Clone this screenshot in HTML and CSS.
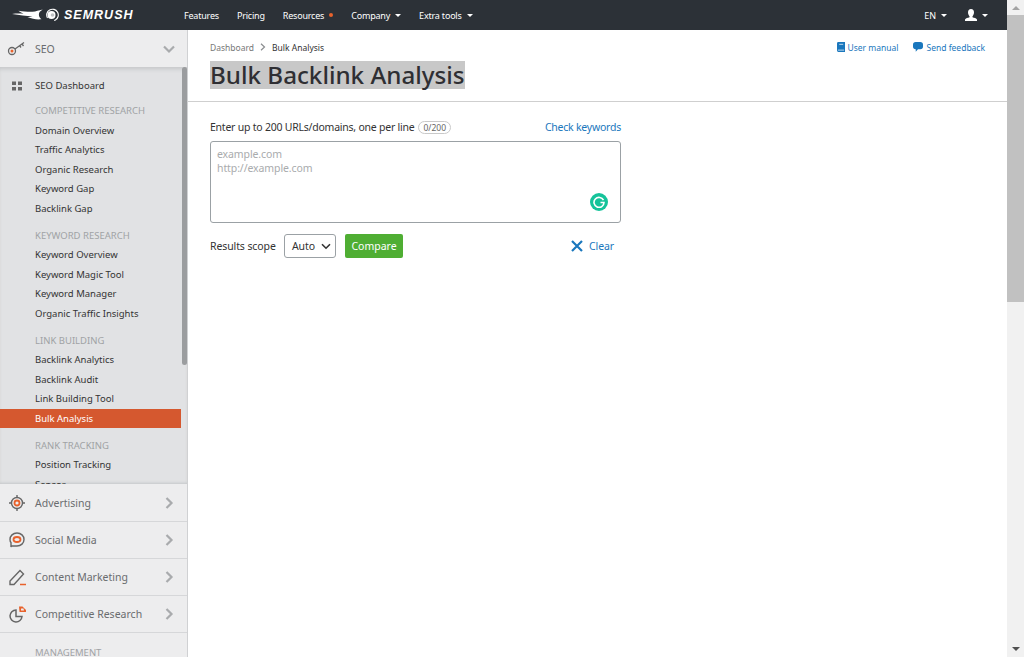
FILE: index.html
```html
<!DOCTYPE html>
<html lang="en">
<head>
<meta charset="utf-8">
<title>Bulk Backlink Analysis</title>
<link rel="stylesheet" href="styles.css">
</head>
<body>
<div class="page">
  <div class="viewport">
    <header class="topbar">
      <a class="logo">
        <svg class="logo-mark" width="47" height="16" viewBox="0 0 47 16">
          <path transform="scale(1.28 1)" fill="#fff" d="M0 7c3-.5 6-.6 9-.2C7.500 6 6 4.800 5 3.800c4 .8 8 1.200 11 1 3-.2 4.500-1.500 8-2.300-2 1.500-3 3-3 5s.8 3.500 2 4.800c-4 .4-7-.2-11-2.300 1.500-.1 3-.3 4-.8C11 9 6 8 0 7z"/>
          <circle cx="40.500" cy="8" r="5.800" fill="none" stroke="#fff" stroke-width="1.100" stroke-dasharray="28 8.500" transform="rotate(150 40.500 8)"/>
          <circle cx="39.500" cy="8" r="4" fill="#fff"/>
          <circle cx="40.500" cy="8" r="1.800" fill="#2c3137" opacity=".3"/>
        </svg>
        <span class="logo-text">SEMRUSH</span>
      </a>
      <nav class="topnav">
        <a>Features</a>
        <a>Pricing</a>
        <a>Resources<i class="dot"></i></a>
        <a>Company<i class="caret"></i></a>
        <a>Extra tools<i class="caret"></i></a>
      </nav>
      <div class="top-right">
        <a>EN<i class="caret"></i></a>
        <a class="user">
          <svg width="12" height="12" viewBox="0 0 12 12"><path fill="#fff" d="M6 0c2 0 3 1.500 3 3.500S8 6.500 7.500 7.300v.9c1.500.5 4 1 4.500 2.300V12H0v-1.500c.5-1.300 3-1.800 4.500-2.300v-.9C4 6.500 3 5.500 3 3.500S4 0 6 0z"/></svg>
          <i class="caret"></i>
        </a>
      </div>
    </header>
    <div class="body">
      <aside class="sidebar">
        <div class="acc acc-open">
          <svg class="acc-icon" width="20" height="20" viewBox="0 0 20 20"><circle cx="5" cy="12" r="3.500" fill="none" stroke="#666" stroke-width="1.300"/><circle cx="5" cy="12" r="1.500" fill="#e8622c"/><path fill="none" stroke="#666" stroke-width="1.300" d="M8 10l9-6.500M12.500 6.500l1.500 2M15 5l1.500 2"/></svg>
          <span class="acc-label">SEO</span>
          <svg class="chev" width="14" height="14" viewBox="0 0 14 14"><path fill="none" stroke="#a9abad" stroke-width="2.200" d="M2 4.500l5 5 5-5"/></svg>
        </div>
        <div class="submenu">
          <ul class="list">
            <li class="item dash">
              <svg class="grid-icon" width="10" height="10" viewBox="0 0 10 10"><path fill="#666" d="M0 .5h4v3.500H0zM6 .5h4v3.500H6zM0 6h4v3.500H0zM6 6h4v3.500H6z"/></svg>
              SEO Dashboard
            </li>
            <li class="head">COMPETITIVE RESEARCH</li>
            <li class="item">Domain Overview</li>
            <li class="item">Traffic Analytics</li>
            <li class="item">Organic Research</li>
            <li class="item">Keyword Gap</li>
            <li class="item">Backlink Gap</li>
            <li class="head">KEYWORD RESEARCH</li>
            <li class="item">Keyword Overview</li>
            <li class="item">Keyword Magic Tool</li>
            <li class="item">Keyword Manager</li>
            <li class="item">Organic Traffic Insights</li>
            <li class="head">LINK BUILDING</li>
            <li class="item">Backlink Analytics</li>
            <li class="item">Backlink Audit</li>
            <li class="item">Link Building Tool</li>
            <li class="item active">Bulk Analysis</li>
            <li class="head">RANK TRACKING</li>
            <li class="item">Position Tracking</li>
            <li class="item">Sensor</li>
          </ul>
          <div class="sub-scroll"></div>
        </div>
        <div class="acc">
          <svg class="acc-icon" width="20" height="20" viewBox="0 0 20 20"><circle cx="10" cy="10" r="5.500" fill="none" stroke="#666" stroke-width="1.400"/><circle cx="10" cy="10" r="2.500" fill="none" stroke="#e8622c" stroke-width="1.800"/><path stroke="#666" stroke-width="1.400" d="M10 2v2.500M10 15.500V18M2 10h2.500M15.500 10H18"/></svg>
          <span class="acc-label">Advertising</span>
          <svg class="chev" width="14" height="14" viewBox="0 0 14 14"><path fill="none" stroke="#a9abad" stroke-width="2.200" d="M4.500 2l5 5-5 5"/></svg>
        </div>
        <div class="acc">
          <svg class="acc-icon" width="20" height="20" viewBox="0 0 20 20"><path fill="none" stroke="#666" stroke-width="1.400" d="M10 3c4 0 7 2.800 7 6.500S14 16 10 16H4.500L4 17v-4.500C3 11.500 3 10.500 3 9.500 3 5.800 6 3 10 3z"/><ellipse cx="10" cy="9.500" rx="3.500" ry="2.500" fill="none" stroke="#e8622c" stroke-width="1.800"/></svg>
          <span class="acc-label">Social Media</span>
          <svg class="chev" width="14" height="14" viewBox="0 0 14 14"><path fill="none" stroke="#a9abad" stroke-width="2.200" d="M4.500 2l5 5-5 5"/></svg>
        </div>
        <div class="acc">
          <svg class="acc-icon" width="20" height="20" viewBox="0 0 20 20"><path fill="none" stroke="#666" stroke-width="1.400" d="M3 17.500v-3.500L13 3.500l3.500 3.500L7 17.500z"/><path stroke="#e8622c" stroke-width="1.500" d="M13 17.500h6"/></svg>
          <span class="acc-label">Content Marketing</span>
          <svg class="chev" width="14" height="14" viewBox="0 0 14 14"><path fill="none" stroke="#a9abad" stroke-width="2.200" d="M4.500 2l5 5-5 5"/></svg>
        </div>
        <div class="acc">
          <svg class="acc-icon" width="20" height="20" viewBox="0 0 20 20"><path fill="none" stroke="#666" stroke-width="1.500" d="M9 6a6 6 0 1 0 6 6.500H9z"/><path fill="#e8622c" d="M12 2.500h3.500L19 6v2h-6.500z"/><path fill="#ededee" d="M14 4.500h2.500L17 6.500h-3z"/></svg>
          <span class="acc-label">Competitive Research</span>
          <svg class="chev" width="14" height="14" viewBox="0 0 14 14"><path fill="none" stroke="#a9abad" stroke-width="2.200" d="M4.500 2l5 5-5 5"/></svg>
        </div>
        <div class="acc-head">MANAGEMENT</div>
      </aside>
      <main class="main">
        <div class="page-head">
          <div class="crumb-row">
            <div class="crumbs">
              <span class="crumb-link">Dashboard</span>
              <svg width="6" height="8" viewBox="0 0 6 8"><path fill="none" stroke="#8a8d90" stroke-width="1.200" d="M1 .8L4.500 4 1 7.200"/></svg>
              <span>Bulk Analysis</span>
            </div>
            <div class="head-links">
              <a>
                <svg width="8" height="10" viewBox="0 0 9 11"><path fill="#1a77bd" d="M1.500 0H9v11H1.500A1.500 1.500 0 0 1 0 9.500v-8A1.500 1.500 0 0 1 1.500 0z"/><path stroke="#fff" stroke-width=".8" d="M1 9h7M2.500 2.500H7"/></svg>
                User manual
              </a>
              <a>
                <svg width="10" height="10" viewBox="0 0 11 11"><path fill="#1a77bd" d="M3 0h5a3 3 0 0 1 3 3v2a3 3 0 0 1-3 3H5.500L3 10.800V8a3 3 0 0 1-3-3V3a3 3 0 0 1 3-3z"/></svg>
                Send feedback
              </a>
            </div>
          </div>
          <h1 class="title"><span class="selected">Bulk Backlink Analysis</span></h1>
        </div>
        <form class="form">
          <div class="label-row">
            <label class="label" for="urls">Enter up to 200 URLs/domains, one per line</label>
            <span class="count">0/200</span>
            <a class="check">Check keywords</a>
          </div>
          <div class="area-wrap">
            <textarea id="urls" class="area" placeholder="example.com&#10;http://example.com"></textarea>
            <span class="grammarly">
              <svg width="12" height="12" viewBox="0 0 12 12"><path fill="none" stroke="#fff" stroke-width="1.600" d="M10.500 4.200A5 5 0 1 0 11 6.500H7.500"/></svg>
            </span>
          </div>
          <div class="action-row">
            <span class="scope">Results scope</span>
            <span class="select">Auto
              <svg width="10" height="7" viewBox="0 0 10 7"><path fill="none" stroke="#333" stroke-width="1.600" d="M1 1.200l4 4 4-4"/></svg>
            </span>
            <button type="button" class="compare">Compare</button>
            <a class="clear">
              <svg width="12" height="12" viewBox="0 0 12 12"><path stroke="#1a77bd" stroke-width="2.200" d="M1 1l10 10M11 1L1 11"/></svg>
              Clear
            </a>
          </div>
        </form>
      </main>
    </div>
  </div>
  <div class="scrollbar">
    <span class="arrow-up"></span>
    <span class="thumb"></span>
    <span class="arrow-down"></span>
  </div>
</div>
</body>
</html>
```

FILE: styles.css
```css
* { box-sizing: border-box; }
html, body { margin: 0; height: 100%; overflow: hidden; }
body { font-family: "Noto Sans", "DejaVu Sans", sans-serif; font-size: 9.500px; color: #333; background: #fff; }
a { color: inherit; text-decoration: none; }
ul { list-style: none; margin: 0; padding: 0; }

.page { display: flex; height: 657px; }
.viewport { flex: 1; min-width: 0; display: flex; flex-direction: column; }

.topbar { height: 30px; flex: none; display: flex; align-items: center; background: #2c3137; color: #fff; padding: 0 36px 0 12px; font-size: 9px; }
.logo { display: flex; align-items: center; width: 172px; gap: 5px; }
.logo-text { font: italic 700 12.500px "Liberation Sans", sans-serif; letter-spacing: 1px; }
.topnav { display: flex; gap: 18px; align-items: center; letter-spacing: -.2px; }
.topnav a, .top-right a { display: flex; align-items: center; }
.dot { width: 4px; height: 4px; border-radius: 50%; background: #e8622c; margin-left: 5px; }
.caret { width: 0; height: 0; margin-left: 5px; border-left: 3.500px solid transparent; border-right: 3.500px solid transparent; border-top: 3.500px solid #fff; }
.top-right { margin-left: auto; display: flex; gap: 18px; align-items: center; margin-right: -17px; }
.user svg { display: block; }

.body { flex: 1; min-height: 0; display: flex; }

.sidebar { width: 188px; flex: none; background: #ededee; border-right: 1px solid #d0d1d3; overflow: hidden; display: flex; flex-direction: column; color: #666; }
.acc { height: 37px; flex: none; display: flex; align-items: center; padding: 0 11px 0 7px; font-size: 10.500px; }
.acc + .acc, .acc-head { border-top: 1px solid #d6d7d9; }
.acc-icon { flex: none; margin-right: 8px; }
.acc-label { flex: 1; color: #6a6c6f; }
.acc-head { padding: 13px 0 0 35px; font-size: 9.500px; color: #a0a2a5; }

.submenu { height: 417px; flex: none; position: relative; overflow: hidden; background: #e1e2e4; box-shadow: inset 0 4px 4px -2px #c4c6c8, inset 0 -3px 3px -2px #c4c6c8; }
.list { padding-top: 9px; width: 181px; }
.item { height: 19.500px; line-height: 19.500px; padding-left: 35px; color: #333; white-space: nowrap; position: relative; }
.dash { margin-bottom: 5.500px; }
.grid-icon { position: absolute; left: 12px; top: 5px; }
.head { height: 19.500px; line-height: 19.500px; padding-left: 35px; margin-top: 7.500px; color: #a0a2a5; }
.dash + .head { margin-top: 0; }
.active { background: #d5582f; color: #fff; }
.sub-scroll { position: absolute; left: 182px; top: 0; width: 5px; height: 298px; background: #9b9d9f; border-radius: 3px; }

.main { flex: 1; min-width: 0; }
.page-head { height: 72px; border-bottom: 1px solid #cfcfcf; padding: 10px 22px 0 22px; }
.crumb-row { display: flex; justify-content: space-between; align-items: center; height: 14px; }
.crumbs { display: flex; align-items: center; gap: 6px; font-size: 8.500px; }
.crumb-link { color: #777; }
.head-links { display: flex; gap: 15px; color: #1a77bd; font-size: 8.500px; }
.head-links a { display: flex; align-items: center; gap: 3px; }
.title { margin: 7px 0 0; font-size: 24.200px; line-height: 28px; font-weight: 500; color: #2f2f33; }
.selected { background: #c8c8c8; display: inline-block; }

.form { width: 411px; margin: 18px 0 0 22px; }
.label-row { display: flex; align-items: center; height: 14px; font-size: 10.500px; letter-spacing: -.23px; }
.count { margin-left: 4px; border: 1px solid #c9c9c9; border-radius: 7px; padding: 0 4px; font-size: 8.500px; line-height: 11px; color: #666; letter-spacing: 0; }
.check { margin-left: auto; color: #1a77bd; }
.area-wrap { position: relative; margin-top: 7px; height: 82px; }
.area { display: block; width: 100%; height: 100%; resize: none; border: 1px solid #9ba1a5; border-radius: 3px; padding: 5px 6px; font: 10.500px/14px "Noto Sans", sans-serif; letter-spacing: -.1px; outline: 0; }
.area::placeholder { color: #a9abad; opacity: 1; }
.grammarly { position: absolute; right: 13px; bottom: 12px; width: 18px; height: 18px; border-radius: 50%; background: #15c39a; display: flex; align-items: center; justify-content: center; }

.action-row { display: flex; align-items: center; margin-top: 11px; height: 24px; font-size: 10.500px; letter-spacing: -.1px; }
.scope { width: 74px; flex: none; }
.select { width: 52px; height: 24px; border: 1px solid #9ba1a5; border-radius: 3px; display: flex; align-items: center; justify-content: space-between; padding: 0 4px 0 7px; }
.compare { margin-left: 9px; width: 58px; height: 24px; border: 0; border-radius: 2px; background: #4fae33; color: #fff; font: 10.500px "Noto Sans", sans-serif; padding: 0; }
.clear { margin-left: auto; margin-right: 7px; display: flex; align-items: center; gap: 6px; color: #1a77bd; }

.scrollbar { width: 17px; flex: none; background: #f1f1f1; display: flex; flex-direction: column; align-items: center; }
.arrow-up { width: 0; height: 0; margin: 6px 0 5px; border-left: 4px solid transparent; border-right: 4px solid transparent; border-bottom: 4px solid #a3a3a3; }
.thumb { width: 17px; height: 287px; background: #c1c1c1; }
.arrow-down { width: 0; height: 0; margin-top: auto; margin-bottom: 6px; border-left: 4px solid transparent; border-right: 4px solid transparent; border-top: 4px solid #505050; }
```
